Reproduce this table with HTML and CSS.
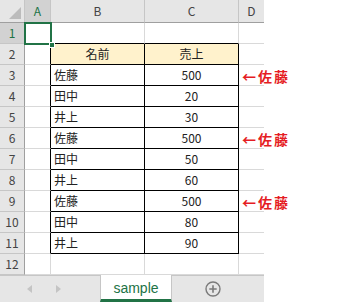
FILE: index.html
```
<!DOCTYPE html>
<html lang="ja">
<head>
	<meta charset="UTF-8">
	<title>sample</title>
	<link rel="stylesheet" href="styles.css">
</head>
<body>
	<div class="book">
		<div class="sheet">
			<!-- 列見出し -->
			<div class="cell corner"><span class="tri"></span></div>
			<div class="cell colhead sel">A</div>
			<div class="cell colhead">B</div>
			<div class="cell colhead">C</div>
			<div class="cell colhead last">D</div>

			<div class="cell rowhead sel">1</div>
			<div class="cell edge"></div>
			<div class="cell top"></div>
			<div class="cell top"></div>
			<div class="cell last"></div>

			<div class="cell rowhead">2</div>
			<div class="cell edge"></div>
			<div class="cell t head">名前</div>
			<div class="cell t head num">売上</div>
			<div class="cell last"></div>

			<div class="cell rowhead">3</div>
			<div class="cell edge"></div>
			<div class="cell t">佐藤</div>
			<div class="cell t num">500</div>
			<div class="cell last"><span class="mark">←佐藤</span></div>

			<div class="cell rowhead">4</div>
			<div class="cell edge"></div>
			<div class="cell t">田中</div>
			<div class="cell t num">20</div>
			<div class="cell last"></div>

			<div class="cell rowhead">5</div>
			<div class="cell edge"></div>
			<div class="cell t">井上</div>
			<div class="cell t num">30</div>
			<div class="cell last"></div>

			<div class="cell rowhead">6</div>
			<div class="cell edge"></div>
			<div class="cell t">佐藤</div>
			<div class="cell t num">500</div>
			<div class="cell last"><span class="mark">←佐藤</span></div>

			<div class="cell rowhead">7</div>
			<div class="cell edge"></div>
			<div class="cell t">田中</div>
			<div class="cell t num">50</div>
			<div class="cell last"></div>

			<div class="cell rowhead">8</div>
			<div class="cell edge"></div>
			<div class="cell t">井上</div>
			<div class="cell t num">60</div>
			<div class="cell last"></div>

			<div class="cell rowhead">9</div>
			<div class="cell edge"></div>
			<div class="cell t">佐藤</div>
			<div class="cell t num">500</div>
			<div class="cell last"><span class="mark">←佐藤</span></div>

			<div class="cell rowhead">10</div>
			<div class="cell edge"></div>
			<div class="cell t">田中</div>
			<div class="cell t num">80</div>
			<div class="cell last"></div>

			<div class="cell rowhead">11</div>
			<div class="cell edge"></div>
			<div class="cell t">井上</div>
			<div class="cell t num">90</div>
			<div class="cell last"></div>

			<div class="cell rowhead">12</div>
			<div class="cell"></div>
			<div class="cell"></div>
			<div class="cell"></div>
			<div class="cell last"></div>

			<!-- 選択中のセル A1 -->
			<div class="cursor"><span class="handle"></span></div>
		</div>

		<div class="tabs">
			<div class="nav">
				<span class="arrow left"></span>
				<span class="arrow right"></span>
			</div>
			<div class="tab">sample</div>
			<div class="add">
				<svg width="16" height="16" viewBox="0 0 16 16">
					<circle cx="8" cy="8" r="7" fill="none" stroke="#7a7a7a" stroke-width="1.4"/>
					<path d="M8 4.3v7.4M4.3 8h7.4" stroke="#7a7a7a" stroke-width="1.6"/>
				</svg>
			</div>
		</div>
	</div>
</body>
</html>
```

FILE: styles.css
```
*{
	margin: 0;
	padding: 0;
	box-sizing: border-box;
}
body{
	background: #fff;
	font-family: "Noto Sans CJK JP", "Liberation Sans", sans-serif;
	font-size: 12px;
	color: #000;
}
.book{
	width: 264px;
}
.sheet{
	position: relative;
	display: grid;
	grid-template-columns: 25px 26px 94px 94px 25px;
	grid-template-rows: 23px;
	grid-auto-rows: 21px;
}
.cell{
	display: flex;
	align-items: center;
	border-right: 1px solid #d9d9d9;
	border-bottom: 1px solid #d9d9d9;
	white-space: nowrap;
	line-height: 1;
}
.cell.last{
	border-right: none;
}
.corner{
	position: relative;
	background: #e6e6e6;
	border-right: 1px solid #c6c6c6;
	border-bottom: 1px solid #9f9f9f;
}
.tri{
	position: absolute;
	right: 3px;
	bottom: 3px;
	width: 0;
	height: 0;
	border-left: 12px solid transparent;
	border-bottom: 12px solid #bcbcbc;
}
.colhead{
	justify-content: center;
	background: #e6e6e6;
	color: #444;
	font-size: 12px;
	border-right: 1px solid #c6c6c6;
	border-bottom: 1px solid #9f9f9f;
}
.colhead.last{
	border-right: none;
}
.rowhead{
	justify-content: center;
	background: #e6e6e6;
	color: #444;
	border-right: 1px solid #9f9f9f;
	border-bottom: 1px solid #c6c6c6;
}
.colhead.sel,.rowhead.sel{
	background: #d2d2d2;
	color: #217346;
}

/* 表の罫線 */
.edge{
	border-right-color: #000;
}
.top{
	border-bottom-color: #000;
}
.t{
	padding-left: 3px;
	color: #222;
	border-right-color: #000;
	border-bottom-color: #000;
}
.t.head{
	justify-content: center;
	padding-left: 0;
	background: #fff2cc;
}
.num{
	justify-content: center;
	padding-left: 0;
}
.mark{
	padding-left: 3px;
	padding-top: 2px;
	color: #e51c23;
	font-size: 14px;
	font-weight: bold;
	letter-spacing: 2px;
}

.cursor{
	position: absolute;
	left: 24px;
	top: 22px;
	width: 28px;
	height: 23px;
	border: 2px solid #217346;
}
.handle{
	position: absolute;
	right: -5px;
	bottom: -5px;
	width: 6px;
	height: 6px;
	background: #217346;
	border: 1px solid #fff;
}

/* シート見出し */
.tabs{
	display: flex;
	align-items: stretch;
	height: 27px;
	background: #e6e6e6;
	border-top: 1px solid #c6c6c6;
}
.nav{
	display: flex;
	align-items: center;
	width: 100px;
	padding-left: 27px;
	gap: 24px;
}
.arrow{
	width: 0;
	height: 0;
	border-top: 4px solid transparent;
	border-bottom: 4px solid transparent;
}
.arrow.left{
	border-right: 5px solid #c4c4c4;
}
.arrow.right{
	border-left: 5px solid #c4c4c4;
}
.tab{
	display: flex;
	align-items: center;
	justify-content: center;
	width: 72px;
	margin-top: -1px;
	background: #fff;
	border-left: 1px solid #c6c6c6;
	border-right: 1px solid #c6c6c6;
	border-bottom: 3px solid #217346;
	color: #217346;
	font-family: "Liberation Sans", "Noto Sans CJK JP", sans-serif;
	font-size: 14px;
	padding-top: 1px;
}
.add{
	display: flex;
	align-items: center;
	margin-left: 33px;
}
.add svg{
	display: block;
}
```
